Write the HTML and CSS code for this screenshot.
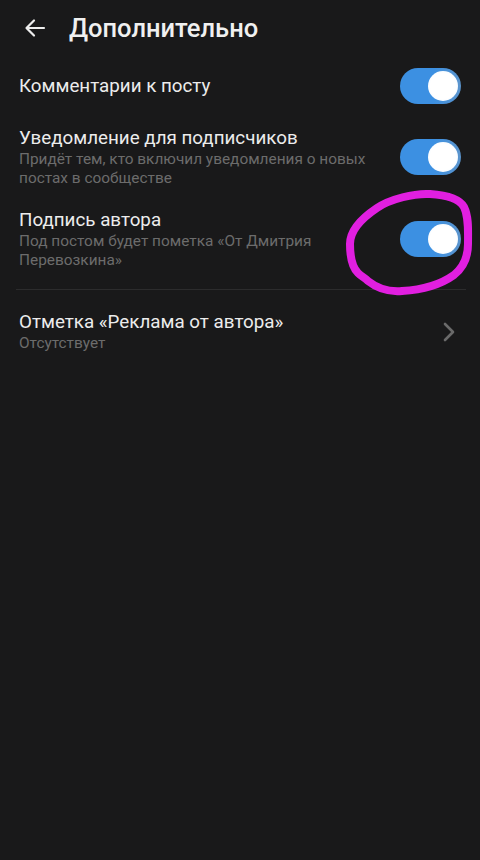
FILE: index.html
```html
<!DOCTYPE html>
<html lang="ru">
<head>
    <meta charset="UTF-8">
    <meta name="viewport" content="width=device-width, initial-scale=1.0">
    <title>Дополнительно</title>
    <link rel="stylesheet" href="styles.css">
</head>
<body>
    <div class="screen">
        <div class="header">
            <svg class="back" width="24" height="24" viewBox="0 0 24 24">
                <path d="M21 12H4M11 4.5L3.5 12L11 19.5" fill="none" stroke="#ededed" stroke-width="2.2" stroke-linecap="round" stroke-linejoin="round"/>
            </svg>
            <h1>Дополнительно</h1>
        </div>

        <div class="row row-single">
            <div class="texts">
                <div class="title">Комментарии к посту</div>
            </div>
            <span class="toggle"><span class="knob"></span></span>
        </div>

        <div class="row">
            <div class="texts">
                <div class="title">Уведомление для подписчиков</div>
                <div class="sub">Придёт тем, кто включил уведомления о новых постах в сообществе</div>
            </div>
            <span class="toggle"><span class="knob"></span></span>
        </div>

        <div class="row row-marked">
            <div class="texts">
                <div class="title">Подпись автора</div>
                <div class="sub">Под постом будет пометка «От Дмитрия Перевозкина»</div>
            </div>
            <span class="toggle"><span class="knob"></span></span>
            <!-- обводка от руки поверх скриншота -->
            <svg class="scribble" width="140" height="112" viewBox="0 0 140 112">
                <path d="M90 5 C75 4 50 10 37 19 C22 29 10 42 10 55 C10 68 12 78 18 84 C22 88 24 88 28 92 C38 100 50 103 62 102 C80 101 100 96 114 86 C124 78 128 66 128 55 C128 42 129 28 124 18 C119 9 105 6 90 5 Z" fill="none" stroke="#e11fe0" stroke-width="8" stroke-linecap="round" stroke-linejoin="round"/>
            </svg>
        </div>

        <div class="divider"></div>

        <div class="row row-link">
            <div class="texts">
                <div class="title">Отметка «Реклама от автора»</div>
                <div class="sub">Отсутствует</div>
            </div>
            <svg class="chevron" width="16" height="24" viewBox="0 0 16 24">
                <path d="M4 4L12 12L4 20" fill="none" stroke="#6a6a6a" stroke-width="2.6" stroke-linecap="round" stroke-linejoin="round"/>
            </svg>
        </div>
    </div>
</body>
</html>
```

FILE: styles.css
```css
html, body {
    margin: 0;
    padding: 0;
}
body {
    font-family: Roboto, "Noto Sans", sans-serif;
    background-color: #19191a;
    color: #ececec;
    width: 480px;
    height: 860px;
    overflow: hidden;
}
.screen {
    display: flex;
    flex-direction: column;
}
.header {
    display: flex;
    align-items: center;
    height: 56px;
    padding-left: 23px;
}
.back {
    display: block;
}
.header h1 {
    margin: 0 0 0 22px;
    font-size: 25.5px;
    font-weight: 500;
    color: #f0f0f0;
}
.row {
    position: relative;
    display: flex;
    align-items: center;
    justify-content: space-between;
    padding: 10px 19px 10px 19px;
}
.row-single {
    padding-top: 12px;
    padding-bottom: 12px;
}
.texts {
    max-width: 372px;
}
.title {
    font-size: 18.8px;
    line-height: 24px;
    color: #ececec;
}
.sub {
    font-size: 15.4px;
    line-height: 19px;
    color: #6c6c6c;
}
.toggle {
    position: relative;
    flex: none;
    width: 61px;
    height: 36px;
    border-radius: 18px;
    background: linear-gradient(90deg, #3c90e2 55%, #5b94cc 100%);
}
.knob {
    position: absolute;
    top: 3px;
    right: 3px;
    width: 30px;
    height: 30px;
    border-radius: 50%;
    background: radial-gradient(circle at 50% 50%, #ffffff 60%, #e6f3ff 100%);
}
.row-marked {
    padding-bottom: 19px;
}
.scribble {
    position: absolute;
    right: 0;
    top: -9px;
    pointer-events: none;
}
.divider {
    height: 1px;
    background-color: #2c2c2d;
    margin: 0 14px 0 16px;
}
.row-link {
    padding-top: 20px;
}
.chevron {
    display: block;
    margin-right: 4px;
}
```
